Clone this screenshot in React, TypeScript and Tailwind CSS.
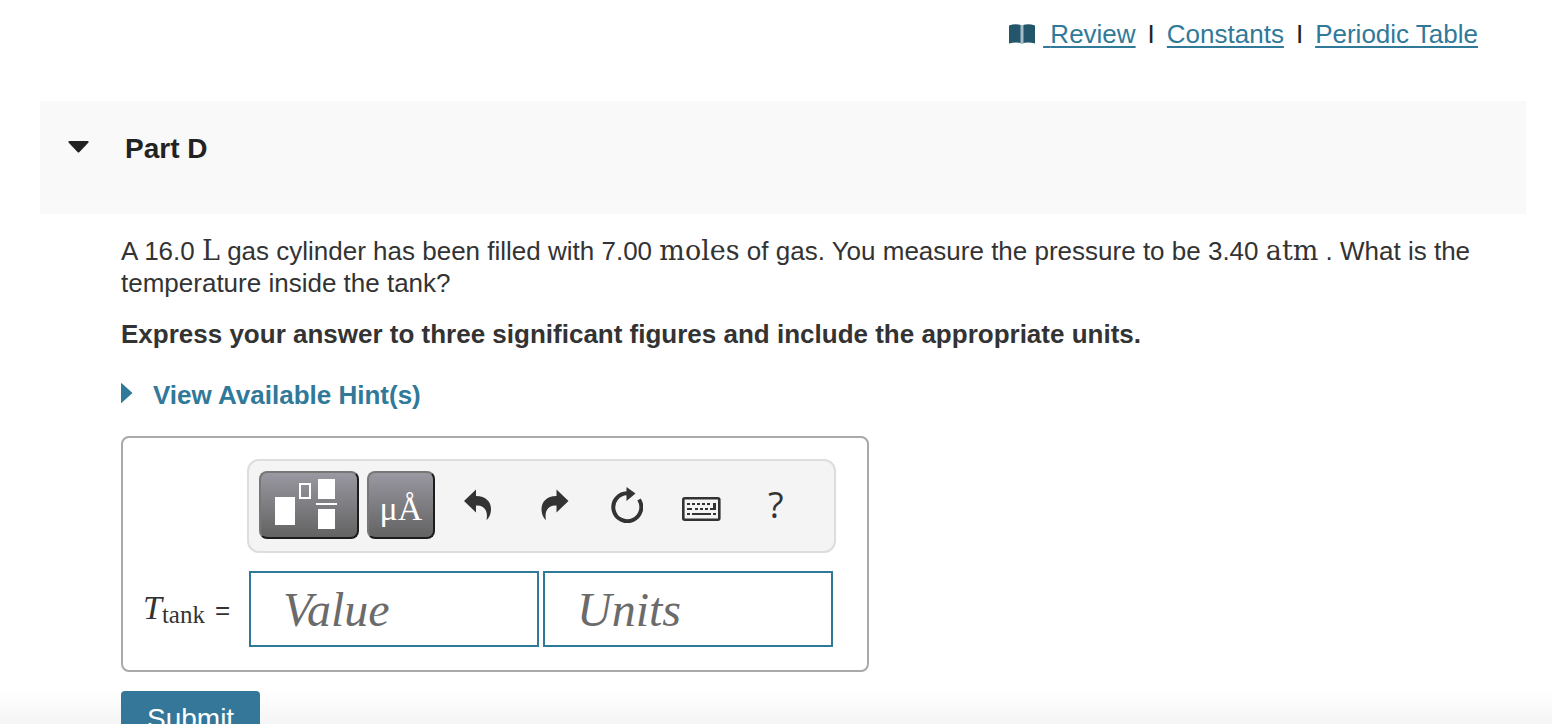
import { useState } from "react";

const UndoIcon = () => (
  <svg width="28" height="32" viewBox="0 0 28 32" fill="#333">
    <path d="M0 12 L12 0.500 V7 C22 7 27 13 27 20 C27 25 25 29 22.500 31 C24 24 22 16 12 16.500 V23.500 Z" />
  </svg>
);

const RedoIcon = () => (
  <svg width="28" height="32" viewBox="0 0 28 32" fill="#333">
    <path d="M27.500 12 L15.500 0.500 V7 C5.500 7 0.500 13 0.500 20 C0.500 25 2.500 29 5 31 C3.500 24 5.500 16 15.500 16.500 V23.500 Z" />
  </svg>
);

const ResetIcon = () => (
  <svg width="32" height="36" viewBox="0 0 32 36">
    <path
      d="M28 12.500 A14 14 0 1 1 16 6.200"
      fill="none"
      stroke="#333"
      strokeWidth="4"
    />
    <path d="M15.500 0 L24.500 6.500 L15.500 14 Z" fill="#333" />
  </svg>
);

const KeyboardIcon = () => (
  <svg width="39" height="24" viewBox="0 0 39 24">
    <rect x="1.300" y="1.300" width="36" height="21.400" rx="1.500" fill="none" stroke="#333" strokeWidth="2.600" />
    <g stroke="#333" strokeWidth="2" fill="none">
      <path d="M5 7 H8 M10 7 H13 M15 7 H18 M20 7 H23 M25 7 H28" />
      <path d="M5 12 H10 M13 12 H16 M18 12 H21 M23 12 H26 M28 12 H34" />
      <path d="M5 17 H8 M10 17 H29 M31 17 H34" />
      <path d="M32.500 6 V13" strokeWidth="3" />
    </g>
  </svg>
);

const BookIcon = () => (
  <svg width="26" height="20" viewBox="0 0 26 20">
    <path d="M0 1.500 Q6 -0.500 12 1 V19 Q6 18 0 19.500 Z" fill="#24566b" />
    <path d="M26 1.500 Q20 -0.500 14 1 V19 Q20 18 26 19.500 Z" fill="#24566b" />
    <path d="M13 1 V20" stroke="#a3bcc6" strokeWidth="3" />
  </svg>
);

const TemplateIcon = () => (
  <svg width="62" height="50" viewBox="0 0 62 50">
    <rect x="0" y="18" width="20" height="28" fill="#fff" />
    <rect x="25" y="5" width="10" height="14" fill="none" stroke="#fff" strokeWidth="2" />
    <rect x="43" y="0" width="17" height="20" fill="#fff" />
    <rect x="41" y="24" width="21" height="2" fill="#fff" />
    <rect x="43" y="30" width="17" height="20" fill="#fff" />
  </svg>
);

const mathClass = "font-['DejaVu_Serif',serif] text-[27px] leading-6";

const fieldClass =
  "h-19 w-[290px] border-2 border-[#317999] bg-white pl-8 font-['Liberation_Serif',serif] text-5xl italic text-[#333] outline-none placeholder:text-[#6b6b6b]";

const padClass =
  "flex h-17 items-center rounded-lg border-2 border-t-[#777] border-l-[#777] border-r-[#1c1c1c] border-b-[#1c1c1c] bg-linear-to-b from-[#9a98a1] to-[#636363]";

const App = () => {
  const [open, setOpen] = useState(true);
  const [value, setValue] = useState("");
  const [units, setUnits] = useState("");

  return (
    <div className="flex h-screen flex-col overflow-hidden bg-white font-['Liberation_Sans',Arial,sans-serif] text-[26px] leading-8 text-[#333]">
      {/* Resource links */}
      <nav className="flex shrink-0 items-center justify-end pt-[18px] pr-[74px] text-[#317999]">
        <BookIcon />
        <a href="#review" className="ml-2 whitespace-pre underline underline-offset-3 decoration-2">
          {" "}Review
        </a>
        <span className="mx-3 text-[#222]">I</span>
        <a href="#constants" className="underline underline-offset-3 decoration-2">
          Constants
        </a>
        <span className="mx-3 text-[#222]">I</span>
        <a href="#periodic" className="underline underline-offset-3 decoration-2">
          Periodic Table
        </a>
      </nav>

      {/* Part header */}
      <header className="mt-[51px] mr-[26px] ml-10 h-[113px] shrink-0 bg-[#f9f9f9] pt-8 pl-7">
        <button
          type="button"
          aria-expanded={open}
          onClick={() => setOpen(!open)}
          className="flex items-center gap-9 text-[28px] font-bold text-[#222]"
        >
          <svg width="21" height="12" viewBox="0 0 21 12" fill="#222" className="mb-1">
            <path d="M1.500 0 H19.500 Q21.500 0.500 20 2 L11.500 11 Q10.500 12 9.500 11 L1 2 Q-0.500 0.500 1.500 0 Z" />
          </svg>
          <span>Part D</span>
        </button>
      </header>

      {/* Question */}
      <main className="mr-[26px] ml-[121px] shrink-0 pt-[21px]">
        <p>
          A 16.0 <span className={mathClass}>L</span> gas cylinder has been filled with 7.00{" "}
          <span className={mathClass}>moles</span> of gas. You measure the pressure to be 3.40{" "}
          <span className={mathClass}>atm</span> . What is the temperature inside the tank?
        </p>
        <p className="mt-[19px] font-bold">
          Express your answer to three significant figures and include the appropriate units.
        </p>
        <button type="button" className="mt-[29px] flex items-center gap-5 font-bold text-[#317999]">
          <svg width="12" height="20" viewBox="0 0 12 20" fill="#317999" className="mb-1">
            <path d="M0 0.500 Q0 -0.500 1 0.500 L11.500 10 L1 19.500 Q0 20.500 0 19.500 Z" />
          </svg>
          <span>View Available Hint(s)</span>
        </button>

        {/* Answer box */}
        <div className="mt-[25px] grid w-fit grid-cols-[124px_auto] gap-y-[18px] rounded-lg border-2 border-[#a9a9a9] pt-[21px] pr-[31px] pb-[23px]">
          <div className="col-start-2 flex items-center rounded-xl border-2 border-[#ddd] bg-[#f4f4f4] pt-[10px] pb-3 pl-[10px]">
            <button type="button" aria-label="Templates" className={`${padClass} w-25 pb-0.5 pl-[14px]`}>
              <TemplateIcon />
            </button>
            <button
              type="button"
              className={`${padClass} ml-2 w-17 justify-center pt-2 font-['Liberation_Serif',serif] text-[34px] text-white`}
            >
              μÅ
            </button>
            <button type="button" aria-label="Undo" className="ml-[29px]">
              <UndoIcon />
            </button>
            <button type="button" aria-label="Redo" className="ml-[49px]">
              <RedoIcon />
            </button>
            <button type="button" aria-label="Reset" className="ml-[42px]">
              <ResetIcon />
            </button>
            <button type="button" aria-label="Keyboard" className="ml-[39px] pt-2">
              <KeyboardIcon />
            </button>
            <button
              type="button"
              aria-label="Help"
              className="ml-[47px] font-['Open_Sans',sans-serif] text-4xl"
            >
              ?
            </button>
          </div>

          <label htmlFor="value" className="flex items-baseline self-center pl-5">
            <span className="font-['Liberation_Serif',serif] text-[34px] italic">T</span>
            <sub className="-bottom-1 font-['Liberation_Serif',serif] text-[25px] leading-none">tank</sub>
            <span className="ml-[10px]">=</span>
          </label>
          <div className="flex gap-1 pr-[3px] pl-0.5">
            <input
              id="value"
              placeholder="Value"
              value={value}
              onChange={(e) => setValue(e.target.value)}
              className={fieldClass}
            />
            <input
              aria-label="Units"
              placeholder="Units"
              value={units}
              onChange={(e) => setUnits(e.target.value)}
              className={fieldClass}
            />
          </div>
        </div>
      </main>

      <div className="min-h-0 grow bg-linear-to-b from-white from-35% to-[#f5f5f5] pt-[19px] pl-[121px]">
        <button type="button" className="rounded-sm bg-[#347799] px-[26px] py-3 text-[28px] text-white">
          Submit
        </button>
      </div>
    </div>
  );
};

export default App;
